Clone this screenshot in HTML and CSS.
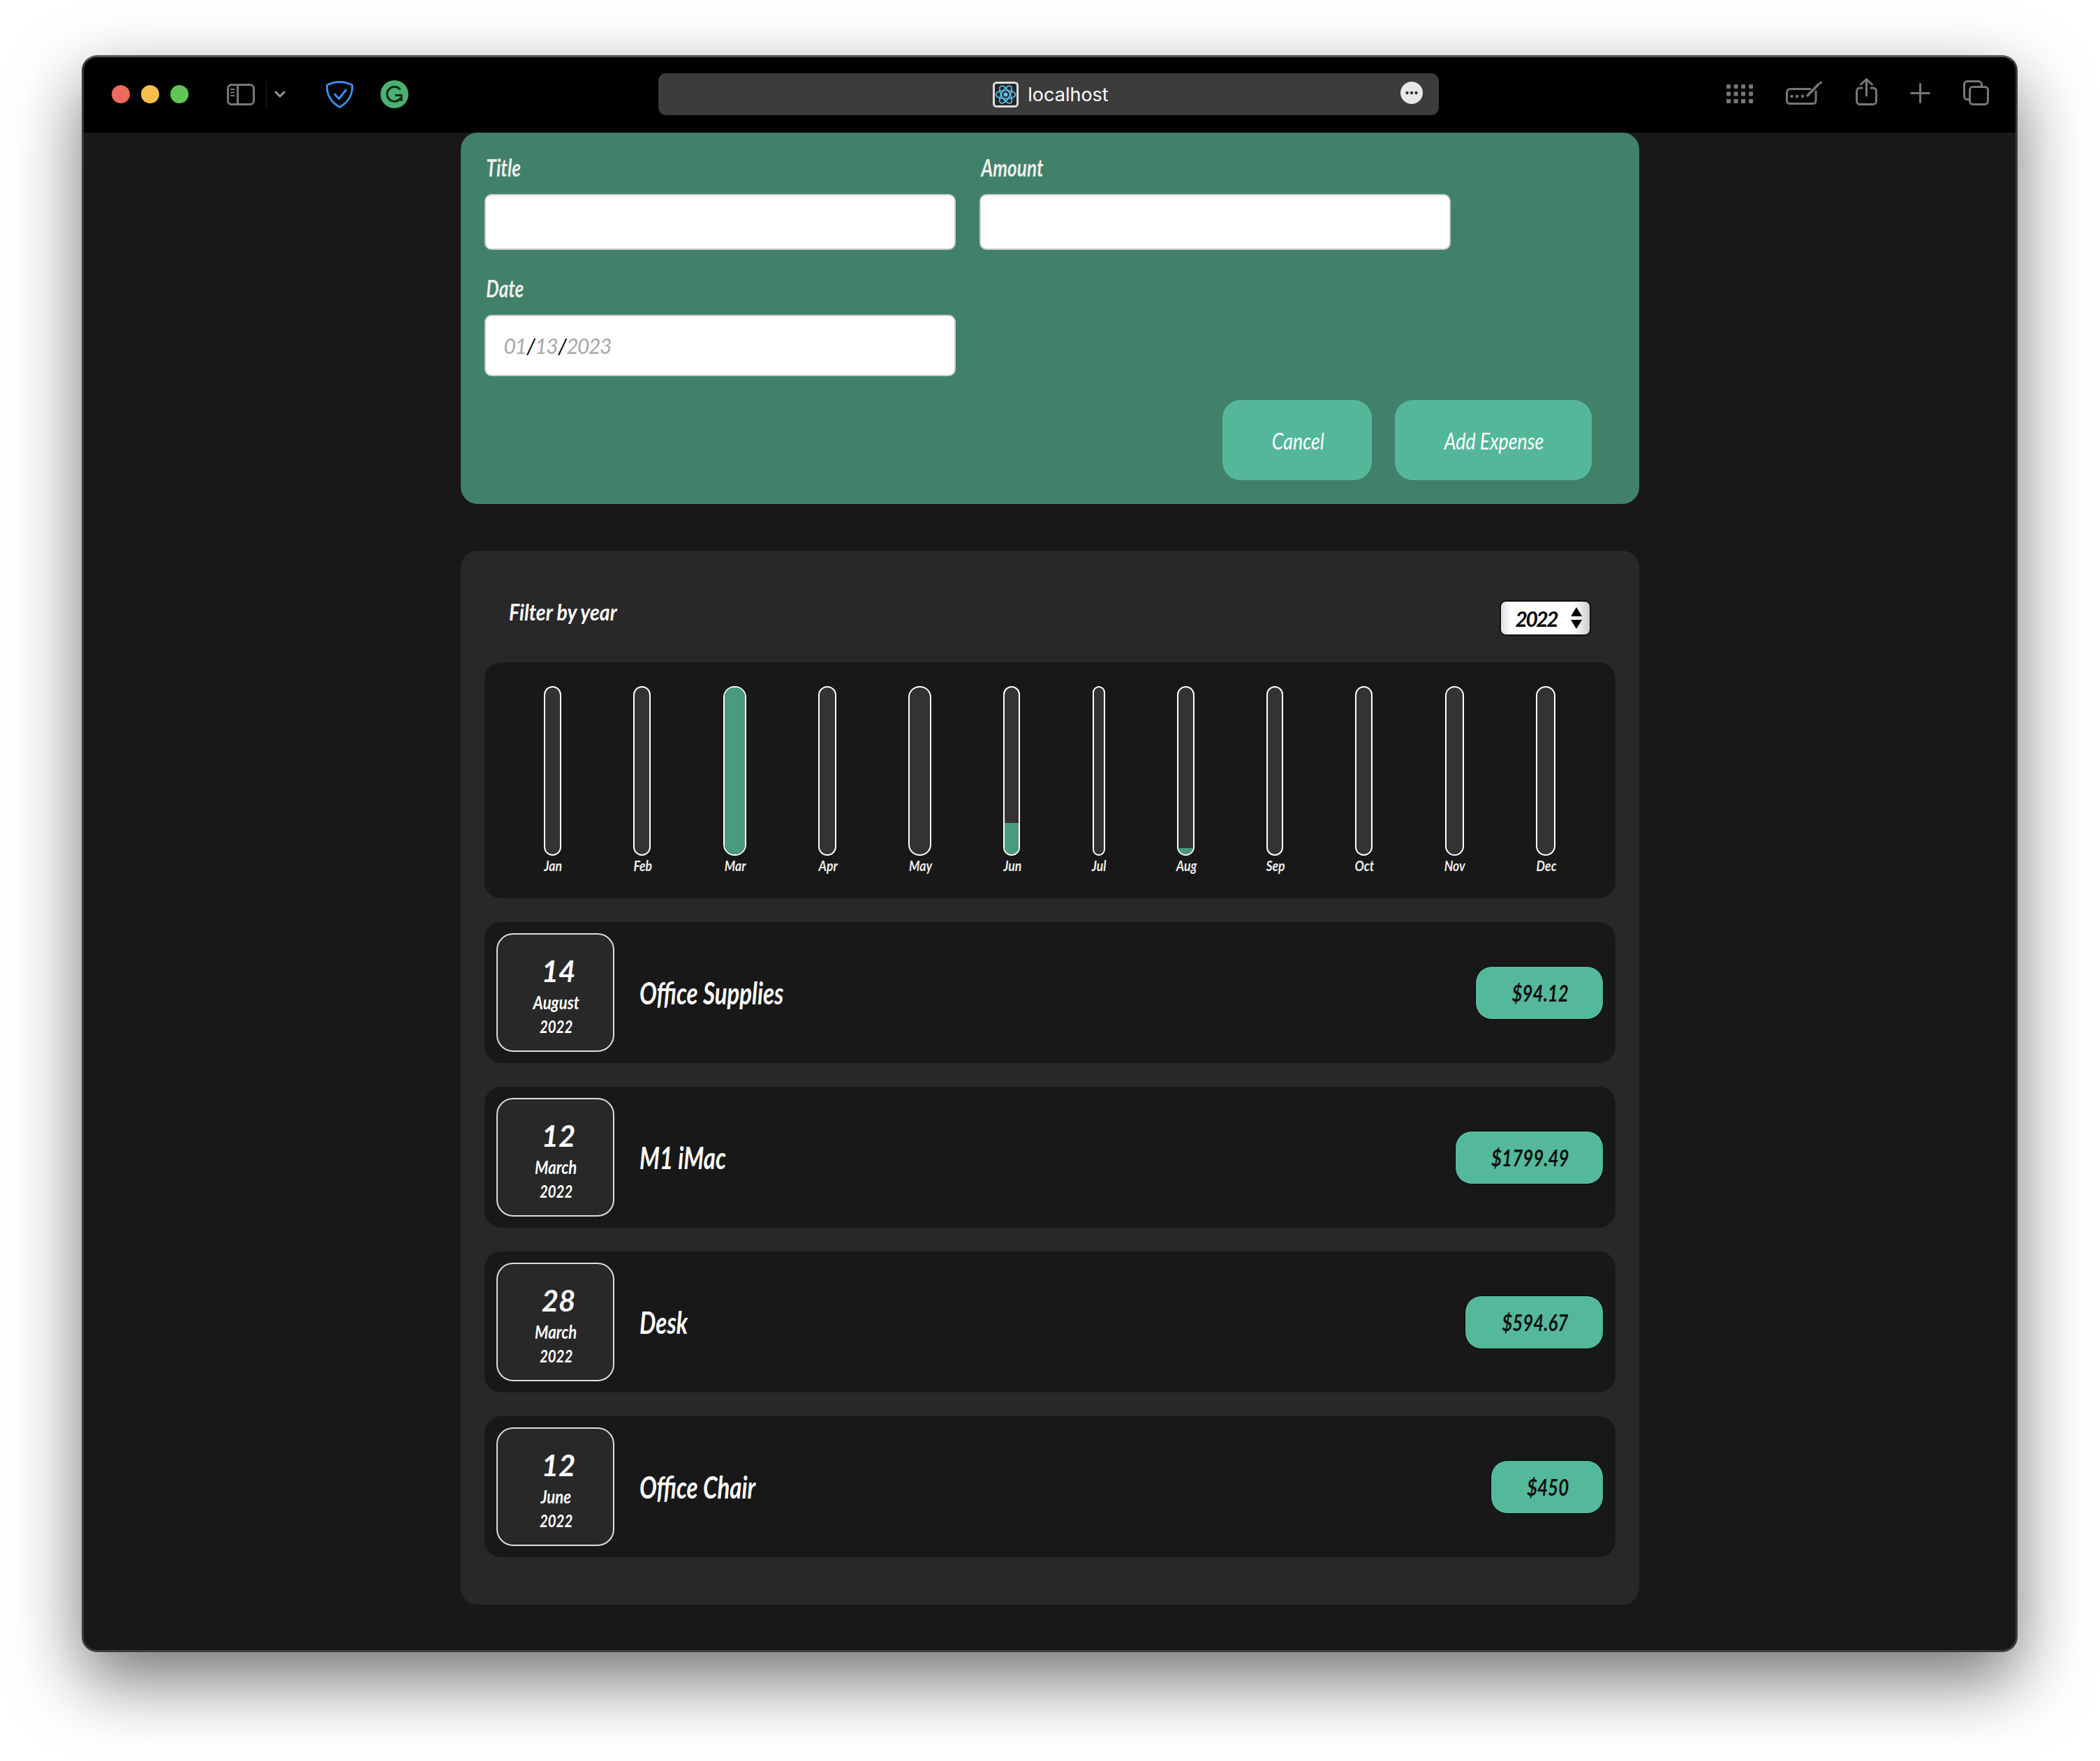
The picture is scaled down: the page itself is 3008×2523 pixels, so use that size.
FILE: index.html
```html
<!DOCTYPE html>
<html lang="en">
<head>
<meta charset="utf-8">
<title>localhost</title>
<link rel="stylesheet" href="styles.css">
</head>
<body>
<div class="window">
  <header class="toolbar">
    <div class="toolbar-left">
      <div class="lights"><span class="light red"></span><span class="light yellow"></span><span class="light green"></span></div>
      <svg class="ic-sidebar" width="40" height="31" viewBox="0 0 40 31" fill="none" stroke="#777" stroke-width="3"><rect x="1.5" y="1.5" width="37" height="28" rx="5"/><path d="M15.5 2v27"/><path d="M5 8h6M5 12.5h6M5 17h6" stroke-width="2"/></svg>
      <span class="tb-divider"></span>
      <svg class="ic-chevron" width="16" height="10" viewBox="0 0 16 10" fill="none" stroke="#999" stroke-width="3" stroke-linecap="round" stroke-linejoin="round"><path d="M2 2l6 6 6-6"/></svg>
      <svg class="ic-shield" width="39" height="39" viewBox="0 0 39 39" fill="none" stroke="#3b8ff0" stroke-width="3" stroke-linejoin="round" stroke-linecap="round"><path d="M19.5 1.5C26 1.5 33 3.5 37.5 6 38.5 20 31 31 19.5 37.5 8 31 .5 20 1.5 6 6 3.5 13 1.5 19.5 1.5Z"/><path d="M12.5 19l6 6.500L28.500 13"/></svg>
      <svg class="ic-grammarly" width="40" height="40" viewBox="0 0 40 40" fill="none"><circle cx="20" cy="20" r="20" fill="#4cb070"/><path d="M27.500 12.500A10.500 10.500 0 1 0 28.500 26" stroke="#12281a" stroke-width="3" stroke-linecap="round"/><path d="M21 21.500h9V30" stroke="#12281a" stroke-width="3"/></svg>
    </div>
    <div class="urlbar">
      <svg class="favicon" width="37" height="37" viewBox="0 0 37 37" fill="none"><rect x="1.500" y="1.500" width="34" height="34" rx="4" fill="#23282b" stroke="#ddd" stroke-width="3"/><g stroke="#61c6ea" stroke-width="1.600"><ellipse cx="18.500" cy="18.500" rx="14" ry="6"/><ellipse cx="18.500" cy="18.500" rx="14" ry="6" transform="rotate(60 18.500 18.500)"/><ellipse cx="18.500" cy="18.500" rx="14" ry="6" transform="rotate(120 18.500 18.500)"/></g><circle cx="18.500" cy="18.500" r="3" fill="#61c6ea"/></svg>
      <span class="url-text">localhost</span>
      <svg class="ic-more" width="32" height="32" viewBox="0 0 32 32"><circle cx="16" cy="16" r="16" fill="#e8e8e8"/><circle cx="9.500" cy="16" r="2.200" fill="#333"/><circle cx="16" cy="16" r="2.200" fill="#333"/><circle cx="22.500" cy="16" r="2.200" fill="#333"/></svg>
    </div>
    <div class="toolbar-right">
      <svg class="ic-grid" width="38" height="27" viewBox="0 0 38 27" fill="#777"><rect x="0" y="0" width="6" height="6" rx="1"/><rect x="10.500" y="0" width="6" height="6" rx="1"/><rect x="21" y="0" width="6" height="6" rx="1"/><rect x="32" y="0" width="6" height="6" rx="1"/><rect x="0" y="10.500" width="6" height="6" rx="1"/><rect x="10.500" y="10.500" width="6" height="6" rx="1"/><rect x="21" y="10.500" width="6" height="6" rx="1"/><rect x="32" y="10.500" width="6" height="6" rx="1"/><rect x="0" y="21" width="6" height="6" rx="1"/><rect x="10.500" y="21" width="6" height="6" rx="1"/><rect x="21" y="21" width="6" height="6" rx="1"/><rect x="32" y="21" width="6" height="6" rx="1"/></svg>
      <svg class="ic-up2" width="53" height="34" viewBox="0 0 53 34" fill="none" stroke="#777" stroke-width="3" stroke-linecap="round"><path d="M35 11.500H6a4.500 4.500 0 0 0-4.500 4.500v13A4 4 0 0 0 6 32.500H39a4 4 0 0 0 4-4V15"/><path d="M31 21L47 4.500" stroke-width="3.500"/><circle cx="50" cy="2.500" r="2" fill="#777" stroke="none"/><circle cx="8.500" cy="22" r="2.200" fill="#777" stroke="none"/><circle cx="16" cy="22" r="2.200" fill="#777" stroke="none"/><circle cx="24" cy="22" r="2.200" fill="#777" stroke="none"/></svg>
      <svg class="ic-share" width="31" height="39" viewBox="0 0 31 39" fill="none" stroke="#777" stroke-width="3" stroke-linecap="round" stroke-linejoin="round"><path d="M9 14H6a4.500 4.500 0 0 0-4.500 4.500V33A4.500 4.500 0 0 0 6 37.500H25a4.500 4.500 0 0 0 4.500-4.500V18.500A4.500 4.500 0 0 0 25 14H22"/><path d="M15.500 25V2M7.500 9l8-7.500 8 7.500"/></svg>
      <svg class="ic-up2" width="29" height="29" viewBox="0 0 29 29" fill="none" stroke="#777" stroke-width="3" stroke-linecap="round"><path d="M14.500 1.500v26M1.500 14.500h26"/></svg>
      <svg class="ic-up2" width="37" height="36" viewBox="0 0 37 36" fill="none" stroke="#777" stroke-width="3"><path d="M8 27.500H6A4.500 4.500 0 0 1 1.500 23V6A4.500 4.500 0 0 1 6 1.500H22A4.500 4.500 0 0 1 26.500 6V8.500"/><rect x="9.500" y="9.500" width="26" height="25" rx="4.500"/></svg>
    </div>
  </header>

  <main class="content">
    <form class="new-expense">
      <div class="controls">
        <div class="control">
          <label class="control-label" for="title">Title</label>
          <input class="field" id="title" type="text">
        </div>
        <div class="control">
          <label class="control-label" for="amount">Amount</label>
          <input class="field" id="amount" type="text">
        </div>
        <div class="control">
          <label class="control-label" for="date">Date</label>
          <input class="field field-date" id="date" type="date" value="2023-01-13">
        </div>
      </div>
      <div class="actions">
        <button class="btn btn-cancel" type="button"><span class="squeeze">Cancel</span></button>
        <button class="btn btn-add" type="button"><span class="squeeze">Add Expense</span></button>
      </div>
    </form>

    <section class="expenses">
      <div class="filter">
        <label class="filter-label" for="year">Filter by year</label>
        <div class="select-wrap">
          <select class="filter-select" id="year"><option>2022</option><option>2021</option><option>2020</option></select>
        </div>
      </div>

      <div class="chart">
        <div class="col" style="width:25px"><div class="bar"><div class="fill" style="height:0%"></div></div><span class="col-label">Jan</span></div>
        <div class="col" style="width:25px"><div class="bar"><div class="fill" style="height:0%"></div></div><span class="col-label">Feb</span></div>
        <div class="col" style="width:33px"><div class="bar"><div class="fill" style="height:100%"></div></div><span class="col-label">Mar</span></div>
        <div class="col" style="width:26px"><div class="bar"><div class="fill" style="height:0%"></div></div><span class="col-label">Apr</span></div>
        <div class="col" style="width:33px"><div class="bar"><div class="fill" style="height:0%"></div></div><span class="col-label">May</span></div>
        <div class="col" style="width:24px"><div class="bar"><div class="fill" style="height:18.800%"></div></div><span class="col-label">Jun</span></div>
        <div class="col" style="width:18px"><div class="bar"><div class="fill" style="height:0%"></div></div><span class="col-label">Jul</span></div>
        <div class="col" style="width:25px"><div class="bar"><div class="fill" style="height:3.900%"></div></div><span class="col-label">Aug</span></div>
        <div class="col" style="width:24px"><div class="bar"><div class="fill" style="height:0%"></div></div><span class="col-label">Sep</span></div>
        <div class="col" style="width:25px"><div class="bar"><div class="fill" style="height:0%"></div></div><span class="col-label">Oct</span></div>
        <div class="col" style="width:27px"><div class="bar"><div class="fill" style="height:0%"></div></div><span class="col-label">Nov</span></div>
        <div class="col" style="width:28px"><div class="bar"><div class="fill" style="height:0%"></div></div><span class="col-label">Dec</span></div>
      </div>

      <ul class="list">
        <li class="item">
          <div class="date-box"><span class="date-day">14</span><span class="date-month">August</span><span class="date-year">2022</span></div>
          <h2 class="item-title">Office Supplies</h2>
          <div class="price price-94"><span class="squeeze">$94.12</span></div>
        </li>
        <li class="item">
          <div class="date-box"><span class="date-day">12</span><span class="date-month">March</span><span class="date-year">2022</span></div>
          <h2 class="item-title">M1 iMac</h2>
          <div class="price price-1799"><span class="squeeze">$1799.49</span></div>
        </li>
        <li class="item">
          <div class="date-box"><span class="date-day">28</span><span class="date-month">March</span><span class="date-year">2022</span></div>
          <h2 class="item-title">Desk</h2>
          <div class="price price-594"><span class="squeeze">$594.67</span></div>
        </li>
        <li class="item">
          <div class="date-box"><span class="date-day">12</span><span class="date-month">June</span><span class="date-year">2022</span></div>
          <h2 class="item-title">Office Chair</h2>
          <div class="price price-450"><span class="squeeze">$450</span></div>
        </li>
      </ul>
    </section>
  </main>
</div>
</body>
</html>
```
FILE: styles.css
```css
* { box-sizing: border-box; }
html, body { margin: 0; padding: 0; }
body {
  width: 3008px;
  height: 2523px;
  background: #fff;
  padding: 79px 118px 0 117px;
  overflow: hidden;
  font-family: Lato, "Liberation Sans", sans-serif;
  font-style: italic;
}
.window {
  height: 2288px;
  border: 3px solid #3c3c3c;
  border-top-color: #585858;
  border-radius: 22px;
  background: #181818;
  overflow: clip;
  box-shadow: 0 40px 100px rgba(0, 0, 0, .55);
  display: flex;
  flex-direction: column;
}

/* toolbar */
.toolbar {
  flex: 0 0 108px;
  padding-bottom: 2px;
  background: #000;
  display: grid;
  grid-template-columns: 823px 1118px 1fr;
  align-items: center;
  font-style: normal;
}
.toolbar-left { display: flex; align-items: center; padding-left: 40px; }
.lights { display: flex; gap: 16px; }
.light { width: 26px; height: 26px; border-radius: 50%; }
.red { background: #ec6a5e; }
.yellow { background: #f4bf4f; }
.green { background: #61c554; }
.ic-sidebar { margin-left: 55px; }
.tb-divider { width: 1px; height: 38px; background: #222; margin-left: 16px; }
.ic-chevron { margin-left: 11px; }
.ic-shield { margin-left: 58px; }
.ic-grammarly { margin-left: 39px; }
.urlbar {
  height: 60px;
  background: #3c3c3c;
  border-radius: 11px;
  display: flex;
  align-items: center;
  justify-content: center;
  gap: 13px;
  position: relative;
}
.favicon { margin-left: 6px; }
.url-text { color: #fff; font-family: Inter, "Liberation Sans", sans-serif; font-size: 27px; }
.ic-more { position: absolute; right: 23px; top: 12px; }
.toolbar-right { display: flex; align-items: center; justify-content: flex-end; gap: 47px; padding-right: 38px; }
.ic-grid { margin-bottom: 1px; }
.ic-up2 { margin-bottom: 4px; }
.ic-share { margin-bottom: 7px; }

/* form */
.content { flex: 1; min-height: 0; }
.new-expense {
  width: 1688px;
  margin: 0 auto;
  background: #418169;
  border-radius: 24px;
  padding: 32px 34px 34px;
}
.controls { display: flex; flex-wrap: wrap; column-gap: 34px; row-gap: 37px; }
.control { width: 675px; }
.control-label {
  display: block;
  height: 36px;
  line-height: 36px;
  margin-bottom: 20px;
  padding-left: 3px;
  color: #eee;
  font-size: 34px;
  font-weight: bold;
  transform: scaleX(.77);
  transform-origin: left center;
}
.field {
  display: block;
  width: 100%;
  height: 80px;
  border: 2px solid #ccc;
  border-radius: 10px;
  background: #fff;
  font: italic 30px Lato, "Liberation Sans", sans-serif;
  letter-spacing: -1.500px;
  padding: 0 25px;
}
.field-date { height: 88px; color: #000; }
.field-date::-webkit-calendar-picker-indicator { display: none; }
.field-date::-webkit-datetime-edit-month-field,
.field-date::-webkit-datetime-edit-day-field,
.field-date::-webkit-datetime-edit-year-field { color: #a8a8a8; }
.field-date::-webkit-datetime-edit-text { color: #000; }
.actions { display: flex; justify-content: flex-end; gap: 33px; margin-top: 34px; padding-right: 34px; }
.btn {
  height: 115px;
  border: 0;
  border-radius: 26px;
  background: #54b79a;
  color: #fff;
  font: italic 33px Lato, "Liberation Sans", sans-serif;
  padding-left: 9px;
}
.btn-cancel { width: 214px; }
.btn-add { width: 282px; }
.squeeze { display: inline-block; transform: scaleX(.81); }

/* expenses */
.expenses {
  width: 1688px;
  margin: 67px auto 0;
  background: #282828;
  border-radius: 24px;
  padding: 34px;
}
.filter { height: 126px; display: flex; justify-content: space-between; align-items: flex-start; padding: 0 35px; }
.filter-label {
  color: #fff;
  font-size: 32px;
  font-weight: bold;
  line-height: 40px;
  margin-top: 34px;
  transform: scaleX(.89);
  transform-origin: left center;
}
.select-wrap { position: relative; margin-top: 37px; width: 131px; height: 51px; }
.select-wrap::before, .select-wrap::after {
  content: "";
  position: absolute;
  right: 13px;
  border-left: 8px solid transparent;
  border-right: 8px solid transparent;
  pointer-events: none;
}
.select-wrap::before { top: 10px; border-bottom: 13px solid #000; }
.select-wrap::after { top: 28px; border-top: 13px solid #000; }
.filter-select {
  appearance: none;
  -webkit-appearance: none;
  width: 100%;
  height: 100%;
  border: 2px solid #111;
  border-radius: 9px;
  background: linear-gradient(90deg, #ddd 0, #fff 12%, #fff 82%, #ccc 100%);
  color: #000;
  font: italic bold 30px Lato, "Liberation Sans", sans-serif;
  letter-spacing: -2.500px;
  padding: 0 0 0 21px;
}

/* chart */
.chart {
  height: 338px;
  background: #181818;
  border-radius: 24px;
  padding: 34px;
  display: flex;
  justify-content: space-around;
}
.col { display: flex; flex-direction: column; align-items: center; }
.bar {
  width: 100%;
  height: 243px;
  flex: none;
  border: 2.500px solid #fff;
  border-radius: 16px;
  background: #333;
  display: flex;
  align-items: flex-end;
  overflow: hidden;
}
.fill { width: 100%; background: #4a9a82; }
.col-label { color: #eee; font-size: 21px; font-weight: bold; line-height: 24px; margin-top: 2px; padding-left: 2px; transform: scaleX(.84); }

/* list */
.list { list-style: none; margin: 34px 0 34px; padding: 0; display: flex; flex-direction: column; gap: 34px; }
.item {
  height: 202px;
  background: #181818;
  border-radius: 24px;
  padding: 0 17px;
  display: flex;
  align-items: center;
}
.date-box {
  width: 169px;
  height: 170px;
  border: 2.500px solid #ddd;
  border-radius: 24px;
  background: #282828;
  color: #fff;
  display: flex;
  flex-direction: column;
  align-items: center;
  padding-top: 28px;
}
.date-day { font-size: 42px; font-weight: bold; line-height: 48px; padding-left: 10px; }
.date-month { font-size: 26px; font-weight: bold; line-height: 42px; padding-left: 3px; transform: scaleX(.85); }
.date-year { font-size: 24px; font-weight: bold; line-height: 28px; padding-left: 3px; transform: scaleX(.85); }
.item-title {
  flex: 1;
  margin: 0 0 0 36px;
  color: #fff;
  font-size: 44px;
  font-weight: bold;
  transform: scaleX(.75);
  transform-origin: left center;
}
.price {
  height: 77px;
  display: flex;
  align-items: center;
  justify-content: center;
  padding-left: 4px;
  background: #54b99b;
  border: 1px solid #000;
  border-radius: 24px;
  color: #111;
  font-size: 32px;
  font-weight: bold;
}
.price-94 { width: 184px; }
.price-1799 { width: 213px; }
.price-594 { width: 199px; }
.price-450 { width: 162px; }
```
